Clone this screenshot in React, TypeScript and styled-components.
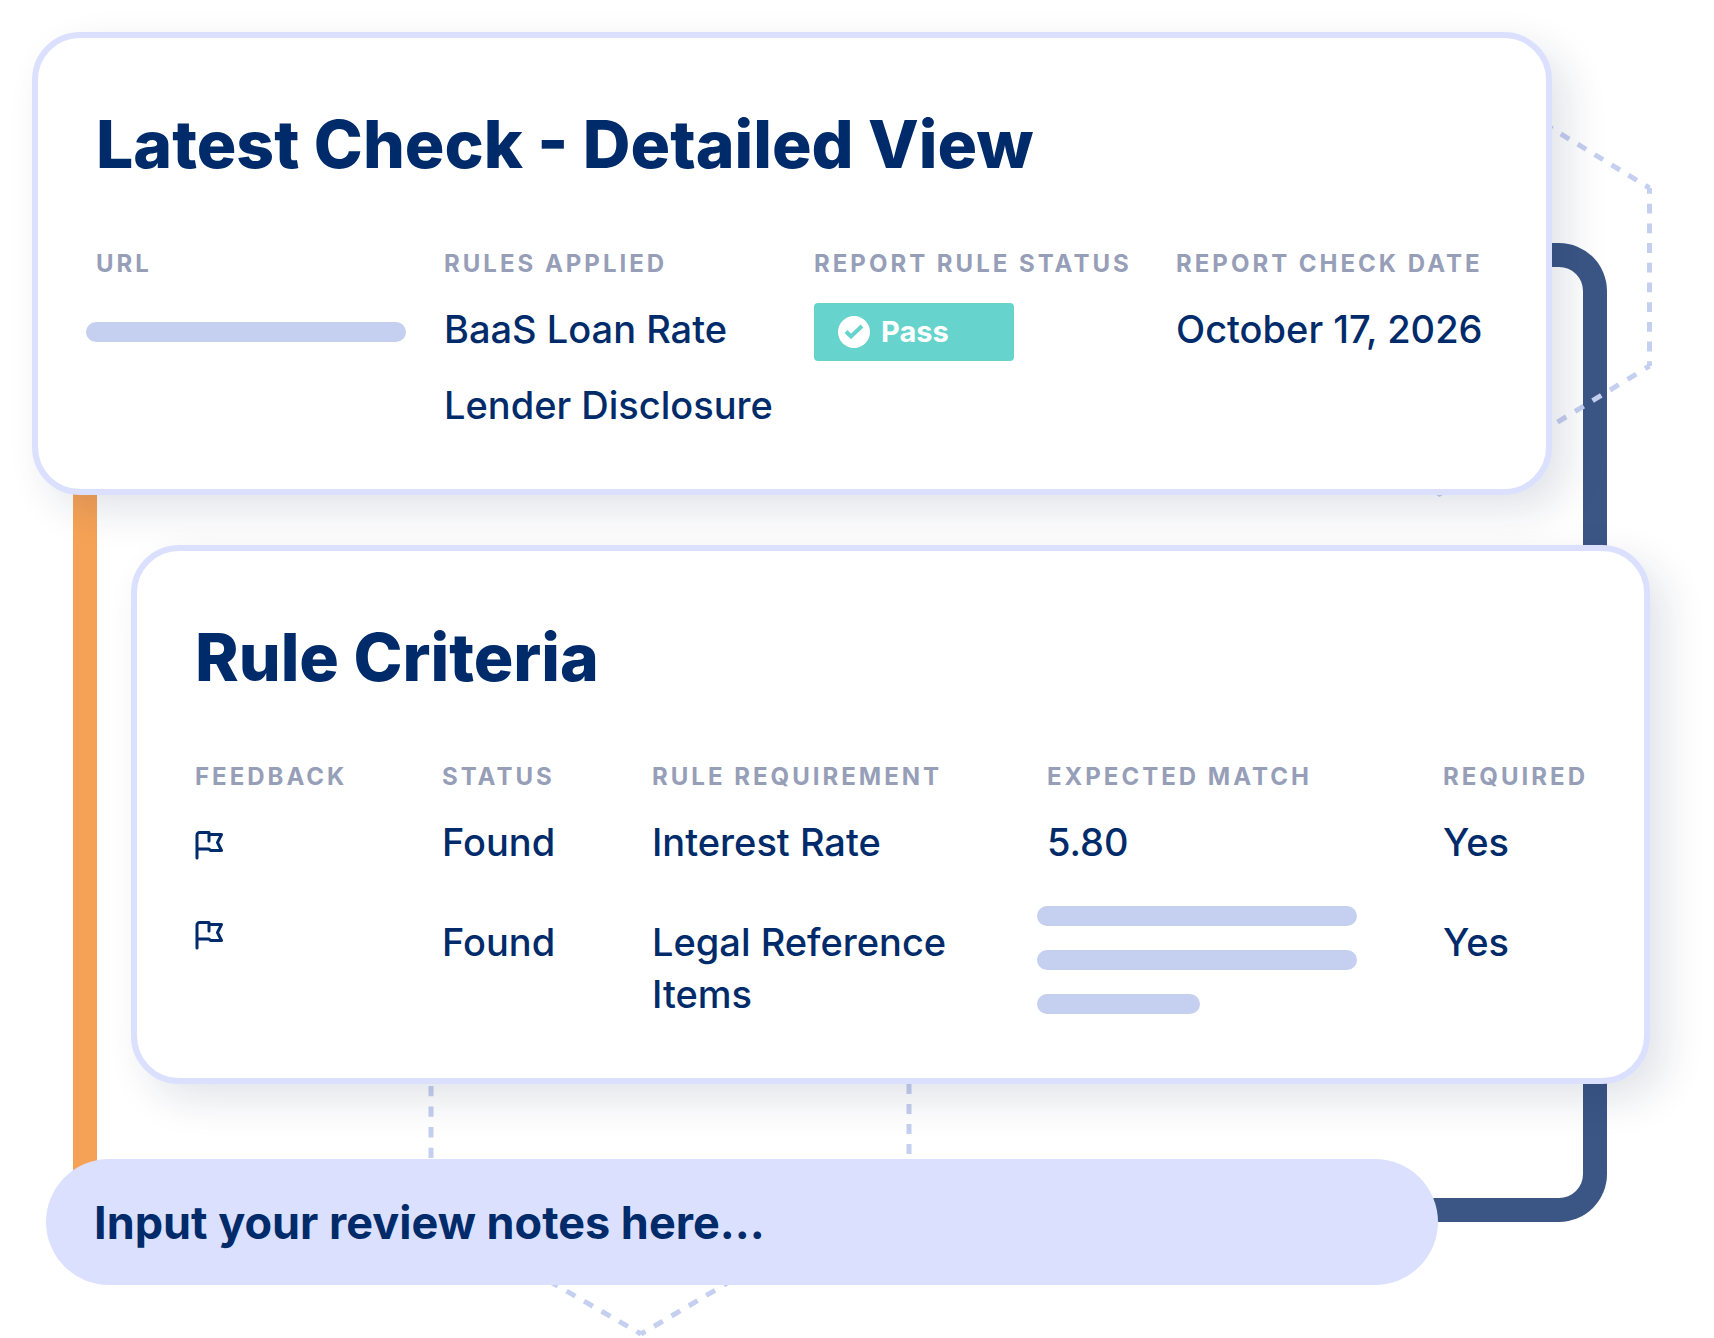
import React from "react";
import styled, { createGlobalStyle } from "styled-components";

const navy = "#002b6a";
const muted = "#969eb8";
const lavender = "#dce0ff";
const periwinkle = "#c5cff0";
const sans = '"Inter", "Open Sans", sans-serif';

const GlobalStyle = createGlobalStyle`
  *, *::before, *::after { box-sizing: border-box; }
  body { margin: 0; background: #fff; color: ${navy}; font-family: ${sans}; }
`;

const Stage = styled.main`
  position: relative;
  isolation: isolate;
  padding: 32px 64px 53px 32px;
  overflow: hidden;
`;

const Backdrop = styled.div`
  position: absolute;
  inset: 0;
  z-index: -1;
`;

const OrangeLine = styled.div`
  position: absolute;
  left: 73px;
  top: 400px;
  bottom: 120px;
  width: 24px;
  background: #f6a256;
`;

const BlueLoop = styled.div`
  position: absolute;
  right: 107px;
  top: 243px;
  bottom: 116px;
  width: 240px;
  border: 24px solid #3b5585;
  border-left: 0;
  border-radius: 0 48px 48px 0;
`;

const Hexagon = styled.svg<{ $side: "left" | "right" }>`
  position: absolute;
  ${(p) => (p.$side === "right" ? "right: 54px; top: 50px;" : "left: 421px; bottom: 0;")}
  overflow: visible;
  fill: none;
  stroke: ${periwinkle};
  stroke-width: 5;
`;

const Card = styled.section<{ $shifted?: boolean }>`
  margin-left: ${(p) => (p.$shifted ? "99px" : "0")};
  margin-right: ${(p) => (p.$shifted ? "0" : "98px")};
  padding: 58px;
  border: 6px solid ${lavender};
  border-radius: 48px;
  background: #fff;
  box-shadow: 16px 16px 40px rgba(0, 30, 70, 0.12);

  & + & { margin-top: 50px; }
`;

const Title = styled.h2`
  margin: 0 0 54px;
  font: 800 66px/96px ${sans};
  white-space: nowrap;
`;

const Table = styled.table`
  width: 100%;
  border-collapse: collapse;
  table-layout: fixed;
`;

const Col = styled.col<{ $width?: number }>`
  width: ${(p) => (p.$width ? `${p.$width}px` : "auto")};
`;

const HeadCell = styled.th`
  padding: 0 0 21px;
  font: 700 24px/36px ${sans};
  letter-spacing: 3px;
  text-align: left;
  white-space: nowrap;
  color: ${muted};
`;

const Row = styled.tr<{ $height?: number }>`
  height: ${(p) => (p.$height ? `${p.$height}px` : "auto")};
`;

const Cell = styled.td<{ $top?: number }>`
  padding: ${(p) => p.$top ?? 0}px 0 0;
  font: 500 38px/52px ${sans};
  vertical-align: top;
`;

const Bars = styled.div`
  display: grid;
  gap: 24px;
  margin-left: -10px;
`;

const Bar = styled.div<{ $short?: boolean }>`
  width: ${(p) => (p.$short ? "163px" : "320px")};
  height: 20px;
  border-radius: 10px;
  background: ${periwinkle};
`;

const Badge = styled.span`
  display: flex;
  align-items: center;
  gap: 11px;
  width: 200px;
  height: 58px;
  padding-left: 24px;
  border-radius: 4px;
  background: #66d4cc;
  color: #fff;
  font: 700 29px/40px ${sans};
`;

const FlagButton = styled.button`
  display: block;
  padding: 0;
  border: 0;
  background: none;
  color: inherit;
  cursor: pointer;

  svg { display: block; }
`;

const NotesInput = styled.input`
  display: block;
  width: calc(100% - 226px);
  height: 126px;
  margin: 75px 0 0 14px;
  padding: 0 48px;
  border: 0;
  border-radius: 63px;
  background: ${lavender};
  color: ${navy};
  font: 700 45px/60px ${sans};

  &::placeholder { color: ${navy}; opacity: 1; }
`;

const CheckIcon = () => (
  <svg width="32" height="32" viewBox="0 0 32 32" aria-hidden="true">
    <circle cx="16" cy="16" r="16" fill="#fff" />
    <path d="M8 15.5l5 5L24 10" fill="none" stroke="#66d4cc" strokeWidth="4" />
  </svg>
);

const FlagIcon = () => (
  <svg
    width="28"
    height="29"
    viewBox="0 0 28 29"
    fill="none"
    stroke="currentColor"
    strokeWidth="3"
    strokeLinecap="round"
    strokeLinejoin="round"
    aria-hidden="true"
  >
    <path d="M2 27V4A2.5 2.5 0 0 1 4.5 1.5H14V10M14 3.5H26.5L22.5 11.5L26.5 19.5H15.5L14 18H2" />
  </svg>
);

const rules = [
  { requirement: "Interest Rate", expected: "5.80" },
  { requirement: "Legal Reference Items", expected: null },
];

export default function App() {
  return (
    <>
      <GlobalStyle />
      <Stage>
        <Backdrop aria-hidden="true">
          <OrangeLine />
          <BlueLoop />
          <Hexagon $side="right" width="221" height="460">
            <path d="M210.5 138L0.5 10" strokeDasharray="9.9 9.9" strokeDashoffset="5" />
            <path d="M210.5 138V316" strokeDasharray="9.8 9.9" strokeDashoffset="4" />
            <path d="M210.5 316L0.5 444L-209.5 316" strokeDasharray="10.2 10.3" strokeDashoffset="5" />
          </Hexagon>
          <Hexagon $side="left" width="500" height="300">
            <path d="M220 296L10 175" strokeDasharray="10.1 10.1" strokeDashoffset="5" />
            <path d="M220 296L430 172" strokeDasharray="10.1 10.1" strokeDashoffset="5" />
            <path d="M10 120V28" strokeDasharray="10.3 10.3" />
            <path d="M488 116V28" strokeDasharray="10 10" />
          </Hexagon>
        </Backdrop>

        <Card>
          <Title>Latest Check - Detailed View</Title>
          <Table>
            <colgroup>
              <Col $width={348} />
              <Col $width={370} />
              <Col $width={362} />
              <Col />
            </colgroup>
            <thead>
              <tr>
                <HeadCell>URL</HeadCell>
                <HeadCell>RULES APPLIED</HeadCell>
                <HeadCell>REPORT RULE STATUS</HeadCell>
                <HeadCell>REPORT CHECK DATE</HeadCell>
              </tr>
            </thead>
            <tbody>
              <Row $height={76}>
                <Cell $top={19}>
                  <Bars>
                    <Bar />
                  </Bars>
                </Cell>
                <Cell>BaaS Loan Rate</Cell>
                <Cell>
                  <Badge>
                    <CheckIcon />
                    Pass
                  </Badge>
                </Cell>
                <Cell>October 17, 2026</Cell>
              </Row>
              <Row>
                <Cell />
                <Cell>Lender Disclosure</Cell>
                <Cell />
                <Cell />
              </Row>
            </tbody>
          </Table>
        </Card>

        <Card $shifted>
          <Title>Rule Criteria</Title>
          <Table>
            <colgroup>
              <Col $width={247} />
              <Col $width={210} />
              <Col $width={395} />
              <Col $width={396} />
              <Col />
            </colgroup>
            <thead>
              <tr>
                <HeadCell>FEEDBACK</HeadCell>
                <HeadCell>STATUS</HeadCell>
                <HeadCell>RULE REQUIREMENT</HeadCell>
                <HeadCell>EXPECTED MATCH</HeadCell>
                <HeadCell>REQUIRED</HeadCell>
              </tr>
            </thead>
            <tbody>
              {rules.map((rule, i) => {
                const top = i === 0 ? 0 : 10;
                return (
                  <Row key={rule.requirement} $height={90}>
                    <Cell $top={15}>
                      <FlagButton type="button" aria-label={`Flag ${rule.requirement}`}>
                        <FlagIcon />
                      </FlagButton>
                    </Cell>
                    <Cell $top={top}>Found</Cell>
                    <Cell $top={top}>{rule.requirement}</Cell>
                    <Cell>
                      {rule.expected ?? (
                        <Bars>
                          <Bar />
                          <Bar />
                          <Bar $short />
                        </Bars>
                      )}
                    </Cell>
                    <Cell $top={top}>Yes</Cell>
                  </Row>
                );
              })}
            </tbody>
          </Table>
        </Card>

        <NotesInput type="text" aria-label="Review notes" placeholder="Input your review notes here..." />
      </Stage>
    </>
  );
}
